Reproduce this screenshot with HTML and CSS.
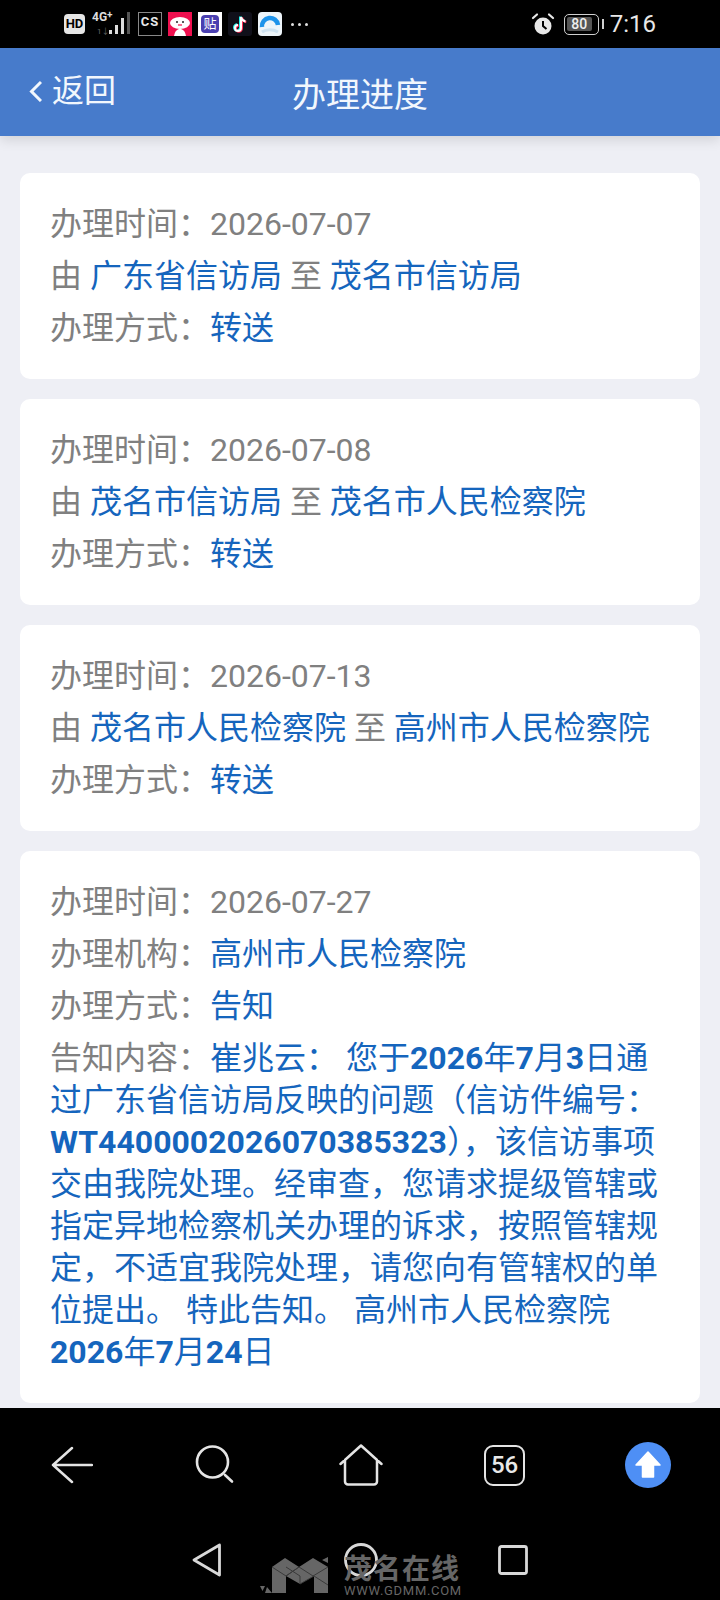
FILE: index.html
```html
<!DOCTYPE html>
<html lang="zh-CN">
<head>
  <meta charset="UTF-8" />
  <meta name="viewport" content="width=device-width, initial-scale=1.0" />
  <title>办理进度</title>
  <link rel="stylesheet" href="styles.css">
</head>
<body>
  <!-- 状态栏 -->
  <div class="status-bar">
    <div class="status-left">
      <span class="hd-badge">HD</span>
      <svg class="signal" width="40" height="30" viewBox="0 0 40 30">
        <text x="0" y="12" class="signal-text">4G</text>
        <text x="15" y="9" class="signal-plus">+</text>
        <text x="5" y="25" class="signal-sub">1↓</text>
        <rect x="17" y="21" width="3" height="4" fill="#ddd"/>
        <rect x="23" y="16" width="3" height="9" fill="#ddd"/>
        <rect x="29" y="9" width="3" height="16" fill="#ddd"/>
        <rect x="35" y="3" width="3" height="22" fill="#555"/>
      </svg>
      <div class="app-icons">
        <span class="app-cs">CS</span>
        <svg class="app" viewBox="0 0 24 24">
          <rect width="24" height="24" fill="#f0104f"/>
          <ellipse cx="12" cy="11" rx="10" ry="6" fill="#fff"/>
          <path d="M6 24c1-5 3-7 6-7s5 2 6 7z" fill="#fff"/>
          <circle cx="9" cy="10" r="1" fill="#222"/>
          <circle cx="15" cy="10" r="1" fill="#222"/>
          <path d="M10 13h4" stroke="#f0104f" stroke-width="1.2"/>
        </svg>
        <span class="app-tie"><span class="tie-bubble">贴</span></span>
        <svg class="app" viewBox="0 0 24 24">
          <rect width="24" height="24" rx="3" fill="#10101a"/>
          <path d="M13 5v11a3 3 0 1 1-3-3M13 5c.5 2.500 2 4 4.500 4.500" fill="none" stroke="#25f4ee" stroke-width="2.400" transform="translate(-.8 -.5)"/>
          <path d="M13 5v11a3 3 0 1 1-3-3M13 5c.5 2.500 2 4 4.500 4.500" fill="none" stroke="#fe2c55" stroke-width="2.400" transform="translate(.8 .5)"/>
          <path d="M13 5v11a3 3 0 1 1-3-3M13 5c.5 2.500 2 4 4.500 4.500" fill="none" stroke="#fff" stroke-width="2"/>
        </svg>
        <svg class="app" viewBox="0 0 24 24">
          <rect width="24" height="24" rx="4" fill="#eef5fa"/>
          <path d="M4 15a8 8 0 0 1 16-2" fill="none" stroke="#1e93ea" stroke-width="4.500"/>
          <path d="M4 20c4-3 11-3 16 0" fill="none" stroke="#cfe3f1" stroke-width="3"/>
        </svg>
      </div>
      <div class="more-dots"><i></i><i></i><i></i></div>
    </div>
    <div class="status-right">
      <svg width="24" height="24" viewBox="0 0 24 24">
        <circle cx="12" cy="14" r="8.500" fill="#e8e8e8"/>
        <path d="M12 9v5l3.500 3" fill="none" stroke="#000" stroke-width="2"/>
        <path d="M2 6l4-3.500M22 6l-4-3.500" stroke="#e8e8e8" stroke-width="2.200" stroke-linecap="round"/>
      </svg>
      <div class="battery"><span class="battery-level">80</span></div>
      <span class="clock">7:16</span>
    </div>
  </div>

  <!-- 标题栏 -->
  <div class="top-bar">
    <a class="back-link">
      <svg width="14" height="22" viewBox="0 0 14 22"><path d="M13 2L3.500 11.500 13 21" fill="none" stroke="#f2f7fd" stroke-width="3"/></svg>
      返回
    </a>
    <div class="page-title">办理进度</div>
  </div>

  <!-- 进度列表 -->
  <div class="progress-list">
    <div class="card">
      <div class="row">办理时间：<span class="date">2026-07-07</span></div>
      <div class="row">由 <span class="val">广东省信访局</span> 至 <span class="val">茂名市信访局</span></div>
      <div class="row">办理方式：<span class="val">转送</span></div>
    </div>
    <div class="card">
      <div class="row">办理时间：<span class="date">2026-07-08</span></div>
      <div class="row">由 <span class="val">茂名市信访局</span> 至 <span class="val">茂名市人民检察院</span></div>
      <div class="row">办理方式：<span class="val">转送</span></div>
    </div>
    <div class="card">
      <div class="row">办理时间：<span class="date">2026-07-13</span></div>
      <div class="row">由 <span class="val">茂名市人民检察院</span> 至 <span class="val">高州市人民检察院</span></div>
      <div class="row">办理方式：<span class="val">转送</span></div>
    </div>
    <div class="card">
      <div class="row">办理时间：<span class="date">2026-07-27</span></div>
      <div class="row">办理机构：<span class="val">高州市人民检察院</span></div>
      <div class="row">办理方式：<span class="val">告知</span></div>
      <div class="row">告知内容：<span class="val">崔兆云： 您于<b>2026</b>年<b>7</b>月<b>3</b>日通过广东省信访局反映的问题（信访件编号：<b>WT4400002026070385323</b>），该信访事项交由我院处理。经审查，您请求提级管辖或指定异地检察机关办理的诉求，按照管辖规定，不适宜我院处理，请您向有管辖权的单位提出。 特此告知。 高州市人民检察院 <b>2026</b>年<b>7</b>月<b>24</b>日</span></div>
    </div>
  </div>

  <!-- 浏览器工具栏 -->
  <div class="toolbar">
    <div class="tool">
      <svg width="42" height="38" viewBox="0 0 42 38"><path d="M21 2L2 19l19 17M2 19h39" fill="none" stroke="#e4e4e4" stroke-width="2.500" stroke-linecap="round" stroke-linejoin="round"/></svg>
    </div>
    <div class="tool tool-search">
      <svg width="40" height="40" viewBox="0 0 40 40"><circle cx="17.500" cy="17" r="15.500" fill="none" stroke="#e4e4e4" stroke-width="2.600"/><path d="M30 30l7 6.500" stroke="#e4e4e4" stroke-width="2.600" stroke-linecap="round"/></svg>
    </div>
    <div class="tool">
      <svg width="44" height="42" viewBox="0 0 44 42"><path d="M1.500 20L22 1.500 42.500 20M6 16v21.500a3 3 0 0 0 3 3h26a3 3 0 0 0 3-3V16" fill="none" stroke="#e4e4e4" stroke-width="2.500" stroke-linecap="round" stroke-linejoin="round"/></svg>
    </div>
    <div class="tool"><span class="tabs-count">56</span></div>
    <div class="tool">
      <svg width="46" height="46" viewBox="0 0 46 46"><circle cx="23" cy="23" r="23" fill="#4e8ff5"/><path d="M23 10L35 23h-6.500v12h-11V23H11z" fill="#fff" stroke="#fff" stroke-width="1.500" stroke-linejoin="round"/></svg>
    </div>
  </div>

  <!-- 系统导航栏 -->
  <div class="nav-bar">
    <svg class="nav-back" width="30" height="34" viewBox="0 0 30 34"><path d="M27.500 2L2 17l25.500 15z" fill="none" stroke="#d8d8d8" stroke-width="2.800" stroke-linejoin="round"/></svg>
    <svg width="34" height="34" viewBox="0 0 34 34"><circle cx="17" cy="17" r="15.500" fill="none" stroke="#d8d8d8" stroke-width="2.800"/></svg>
    <svg width="30" height="30" viewBox="0 0 30 30"><rect x="1.500" y="1.500" width="27" height="27" rx="2" fill="none" stroke="#d8d8d8" stroke-width="2.800"/></svg>
  </div>

  <!-- 水印 -->
  <div class="watermark">
    <svg width="72" height="40" viewBox="0 0 72 40">
      <path d="M12 11L25 2l14 9 14-9 15 9v26H54V20l-14 8-14-8v17H12z" fill="#666"/>
      <path d="M12 11l14 9 13-9 14 9 15-9M26 20l13-9M40 28V20l-14-9M54 20l-14 8M54 20l14 9" fill="none" stroke="#3a3a3a" stroke-width="1"/>
      <path d="M0 30l5 0-2.500 5zM7 31l5 6H5zM62 4l6-3v6z" fill="#666"/>
    </svg>
    <div class="wm-text">
      <div class="wm-name">茂名在线</div>
      <div class="wm-url">WWW.GDMM.COM</div>
    </div>
  </div>
</body>
</html>
```

FILE: styles.css
```css
* {
  box-sizing: border-box;
}
html, body {
  margin: 0;
  height: 100%;
}
body {
  position: relative;
  width: 720px;
  height: 1600px;
  overflow: hidden;
  display: flex;
  flex-direction: column;
  background-color: #eeeff5;
  font-family: Roboto, "Noto Sans CJK SC", sans-serif;
}

/* 状态栏 */
.status-bar {
  height: 48px;
  flex: none;
  display: flex;
  justify-content: space-between;
  align-items: center;
  padding: 0 64px 0 64px;
  background-color: #000;
  color: #e8e8e8;
}
.status-left, .status-right, .app-icons {
  display: flex;
  align-items: center;
}
.hd-badge {
  width: 21px;
  height: 20px;
  margin-right: 7px;
  border-radius: 4px;
  background-color: #e6e6e6;
  color: #000;
  font-size: 13px;
  font-weight: 700;
  line-height: 20px;
  text-align: center;
}
.signal-text, .signal-plus {
  fill: #ddd;
  font-size: 12px;
  font-weight: 700;
}
.signal-plus {
  font-size: 10px;
}
.signal-sub {
  fill: #666;
  font-size: 8px;
}
.app-icons {
  gap: 6px;
  margin-left: 6px;
}
.app {
  width: 24px;
  height: 24px;
  display: block;
}
.app-cs {
  width: 24px;
  height: 24px;
  border: 1px solid #888;
  color: #e8e8e8;
  font-size: 13px;
  font-weight: 700;
  line-height: 18px;
  text-align: center;
  letter-spacing: 1px;
}
.app-tie {
  width: 24px;
  height: 24px;
  padding: 3px;
  background-color: #fff;
}
.tie-bubble {
  display: block;
  height: 18px;
  border-radius: 4px;
  background-color: #4a3fb0;
  color: #fff;
  font-size: 13px;
  line-height: 18px;
  text-align: center;
}
.more-dots {
  display: flex;
  gap: 4px;
  margin-left: 9px;
}
.more-dots i {
  width: 3px;
  height: 3px;
  border-radius: 50%;
  background-color: #e0e0e0;
}
.status-right svg {
  display: block;
}
.battery {
  position: relative;
  width: 35px;
  height: 21px;
  margin: 0 11px 0 9px;
  padding: 2px;
  border: 1.500px solid #cfcfcf;
  border-radius: 5px;
}
.battery::after {
  content: "";
  position: absolute;
  right: -6px;
  top: 4px;
  width: 2px;
  height: 10px;
  background-color: #cfcfcf;
}
.battery-level {
  display: block;
  width: 25px;
  height: 14px;
  background-color: #555;
  border-radius: 2px;
  color: #eee;
  font-size: 14px;
  font-weight: 500;
  line-height: 14px;
  text-align: center;
}
.clock {
  font-size: 24px;
  line-height: 24px;
}

/* 标题栏 */
.top-bar {
  position: relative;
  height: 88px;
  flex: none;
  display: flex;
  align-items: center;
  justify-content: center;
  background-color: #477bcb;
  box-shadow: 0 4px 12px rgba(0,0,0,0.12);
  color: #f2f7fd;
}
.page-title {
  font-size: 34px;
}
.back-link {
  position: absolute;
  left: 28px;
  top: 22px;
  display: flex;
  align-items: center;
  gap: 10px;
  font-size: 32px;
  line-height: 42px;
}

/* 进度列表 */
.progress-list {
  flex: 1;
  overflow: hidden;
  padding: 37px 20px 0;
  font-size: 32px;
  line-height: 42px;
  color: #808080;
}
.card {
  margin-bottom: 20px;
  padding: 30px;
  border-radius: 10px;
  background-color: #fff;
}
.row {
  margin-bottom: 10px;
}
.row:last-child {
  margin-bottom: 0;
}
.val {
  color: #1565bd;
}
.val b {
  font-weight: 700;
}

/* 浏览器工具栏 */
.toolbar {
  height: 114px;
  flex: none;
  display: flex;
  align-items: center;
  background-color: #000;
}
.tool {
  flex: 1;
  display: flex;
  justify-content: center;
}
.tool-search {
  padding-right: 2px;
}
.tool svg {
  display: block;
}
.tabs-count {
  width: 41px;
  height: 41px;
  border: 2.500px solid #e4e4e4;
  border-radius: 9px;
  color: #e8e8e8;
  font-size: 24px;
  font-weight: 500;
  line-height: 36px;
  text-align: center;
}

/* 系统导航栏 */
.nav-bar {
  height: 78px;
  flex: none;
  display: flex;
  justify-content: center;
  align-items: center;
  gap: 120px;
  padding-bottom: 2px;
  background-color: #000;
}
.nav-back {
  margin-right: 2px;
}

/* 水印 */
.watermark {
  position: absolute;
  left: 260px;
  top: 1556px;
  display: flex;
  gap: 12px;
}
.wm-text {
  color: #666;
}
.wm-name {
  font-size: 28px;
  font-weight: 700;
  line-height: 28px;
  letter-spacing: 1px;
}
.wm-url {
  font-size: 13px;
  line-height: 14px;
  letter-spacing: .7px;
}
```
